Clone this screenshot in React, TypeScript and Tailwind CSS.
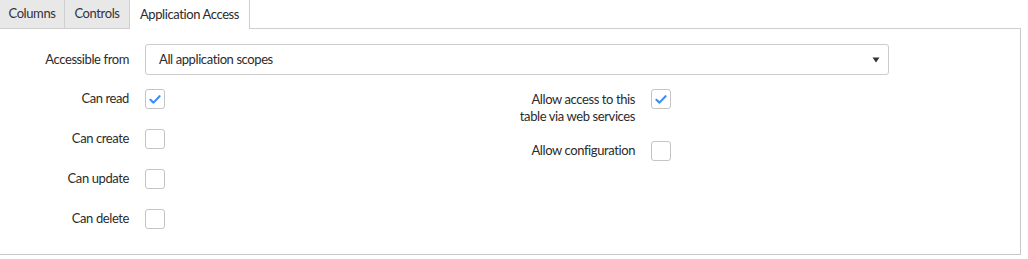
import React from "react";

function Check({ checked }: { checked?: boolean }) {
  return (
    <div className="w-[20px] h-[20px] rounded-[3px] border border-[#c4c4c4] bg-white flex items-center justify-center shrink-0">
      {checked && (
        <svg width="14" height="14" viewBox="0 0 14 14">
          <path d="M2.4 7.8 L5.5 10.6 L11.6 4.2" fill="none" stroke="#3f8cf4" strokeWidth="2.1" strokeLinecap="round" strokeLinejoin="round" />
        </svg>
      )}
    </div>
  );
}

function Row({ label, checked }: { label: string; checked?: boolean }) {
  return (
    <div className="flex items-center h-[20px]">
      <div className="w-[129px] text-right">{label}</div>
      <div className="ml-[16px]">
        <Check checked={checked} />
      </div>
    </div>
  );
}

export default function App() {
  return (
    <div
      className="w-[1028px] h-[259px] bg-white text-[13px] tracking-[-0.4px] text-[#2b2b2b]"
      style={{ fontFamily: "Lato, 'Liberation Sans', sans-serif" }}
    >
      <div className="flex h-[29px]">
        <div className="w-[65px] bg-[#e8e8e8] border-r border-b border-[#cfcfcf] flex items-center justify-center text-[#333333]">
          Columns
        </div>
        <div className="w-[65px] bg-[#e8e8e8] border-r border-b border-[#cfcfcf] flex items-center justify-center text-[#333333]">
          Controls
        </div>
        <div className="w-[120px] bg-white border-r border-[#cfcfcf] flex items-center justify-center text-[#2b2b2b]">
          Application Access
        </div>
        <div className="w-[771px] border-b border-[#cfcfcf]"></div>
      </div>
      <div className="w-[1021px] h-[226px] border-r border-b border-[#c8c8c8] pt-[15px]">
        <div className="flex items-center h-[31px]">
          <div className="w-[129px] text-right">Accessible from</div>
          <div className="ml-[16px] w-[744px] h-[31px] border border-[#cccccc] rounded-[3px] flex items-center justify-between pl-[13px] pr-[8px]">
            <span>All application scopes</span>
            <svg width="8" height="6" viewBox="0 0 8 6">
              <path d="M0.5 0.5 L7.5 0.5 L4 5.5 Z" fill="#333" />
            </svg>
          </div>
        </div>
        <div className="flex mt-[14px]">
          <div className="w-[490px] flex flex-col gap-[20px]">
            <Row label="Can read" checked />
            <Row label="Can create" />
            <Row label="Can update" />
            <Row label="Can delete" />
          </div>
          <div className="flex flex-col">
            <div className="flex items-start">
              <div className="w-[145px] text-right leading-[17px] mt-[2px]">
                Allow access to this
                <br />
                table via web services
              </div>
              <div className="ml-[16px]">
                <Check checked />
              </div>
            </div>
            <div className="flex items-center mt-[16px]">
              <div className="w-[145px] text-right">Allow configuration</div>
              <div className="ml-[16px]">
                <Check />
              </div>
            </div>
          </div>
        </div>
      </div>
    </div>
  );
}
